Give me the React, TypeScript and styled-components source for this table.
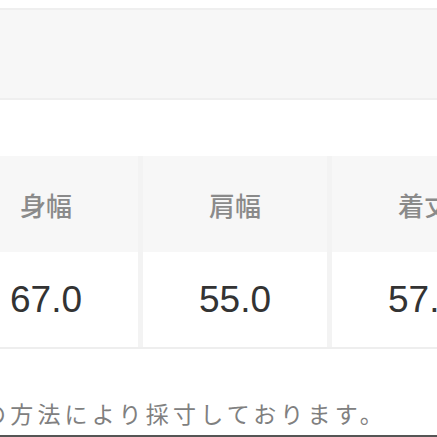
import { FC } from 'react';
import styled, { createGlobalStyle } from 'styled-components';

const GlobalStyle = createGlobalStyle`
  html, body {
    margin: 0;
    padding: 0;
    background: #fff;
  }
  body {
    font-family: 'Noto Sans CJK JP', 'Noto Sans', 'Liberation Sans', sans-serif;
  }
`;

const PageStyled = styled.div`
  width: 437px;
  height: 437px;
  overflow: hidden;
  display: flex;
  flex-direction: column;
  padding-top: 8px;
  box-sizing: border-box;
`;

const TopBar = styled.div`
  height: 88px;
  background: #f7f7f7;
  border-top: 2px solid #efefef;
  border-bottom: 2px solid #efefef;
  flex-shrink: 0;
`;

const SizeTable = styled.div`
  margin-top: 56px;
  margin-left: -46px;
  display: grid;
  grid-template-columns: repeat(4, 184px);
  column-gap: 5px;
  background: #f3f3f3;
  border-bottom: 2px solid #eeeeee;
  width: max-content;
  flex-shrink: 0;
`;

const HeadCell = styled.div`
  height: 96px;
  display: flex;
  align-items: center;
  justify-content: center;
  background: #f7f7f7;
  color: #8a8a8a;
  font-size: 26px;
  font-weight: 500;
`;

const ValueCell = styled.div`
  height: 95px;
  display: flex;
  align-items: center;
  justify-content: center;
  background: #fff;
  color: #333;
  font-family: 'Liberation Sans', Arial, sans-serif;
  font-size: 37px;
`;

const Note = styled.p`
  margin: 50px 0 0 -17px;
  white-space: nowrap;
  color: #808080;
  font-size: 23px;
  letter-spacing: 4.2px;
  line-height: 28px;
`;

const BottomLine = styled.div`
  margin-top: auto;
  height: 2px;
  background: #555;
`;

const sizes = [
  { label: '身幅', value: '67.0' },
  { label: '肩幅', value: '55.0' },
  { label: '着丈', value: '57.0' },
  { label: '袖丈', value: '58.0' },
];

const App: FC = () => (
  <>
    <GlobalStyle />
    <PageStyled>
      <TopBar />
      <SizeTable>
        {sizes.map((s) => (
          <HeadCell key={s.label}>{s.label}</HeadCell>
        ))}
        {sizes.map((s) => (
          <ValueCell key={s.label}>{s.value}</ValueCell>
        ))}
      </SizeTable>
      <Note>の方法により採寸しております。</Note>
      <BottomLine />
    </PageStyled>
  </>
);

export default App;
